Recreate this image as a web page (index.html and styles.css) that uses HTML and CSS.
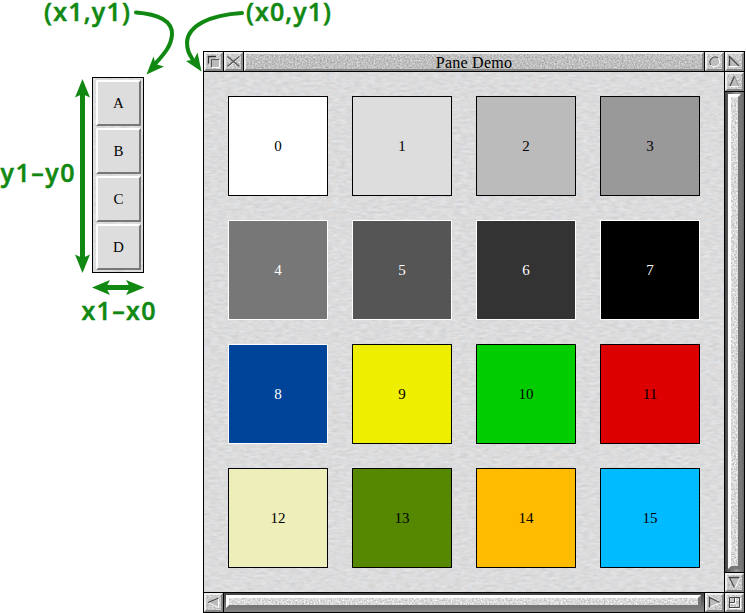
FILE: index.html
```
<!DOCTYPE html>
<html lang="en">
<head>
<meta charset="utf-8">
<title>Pane Demo</title>
<link rel="stylesheet" href="styles.css">
</head>
<body>
<svg class="defs" width="0" height="0">
  <filter id="paper" x="0" y="0" width="100%" height="100%" color-interpolation-filters="sRGB">
    <feTurbulence type="fractalNoise" baseFrequency=".14 .38" numOctaves="3" seed="4"/>
    <feColorMatrix values=".10 .07 0 0 .775  .10 .04 .03 0 .775  .10 .03 .06 0 .77  0 0 0 0 1"/>
  </filter>
  <filter id="grain" x="0" y="0" width="100%" height="100%" color-interpolation-filters="sRGB">
    <feTurbulence type="fractalNoise" baseFrequency=".6" numOctaves="2" seed="8"/>
    <feColorMatrix values=".42 0 0 0 .58  .42 0 0 0 .58  .42 0 0 0 .58  0 0 0 0 1"/>
  </filter>
</svg>
<main class="scene">
  <section class="panel">
    <svg class="tex"><rect width="100%" height="100%" filter="url(#paper)"/></svg>
    <div class="key">A</div><div class="key">B</div><div class="key">C</div><div class="key">D</div>
  </section>
  <section class="window">
    <div class="ctl"><svg class="tex"><rect width="100%" height="100%" filter="url(#grain)"/></svg><svg class="icon" viewBox="0 0 19 19"><path d="M4.500 11.500V4.500H12" stroke="#333" stroke-width="1.300"/><path d="M7 7h8v8H7z" fill="#bbb"/><path d="M7.500 15V7.500H15" stroke="#555"/><path d="M8 15.500h7.500V8" stroke="#fff"/></svg></div>
    <div class="ctl"><svg class="tex"><rect width="100%" height="100%" filter="url(#grain)"/></svg><svg class="icon" viewBox="0 0 19 19"><path d="M4 5l12 10M16 5L4 15" stroke="#fff" stroke-width="1.500"/><path d="M3.500 4.500l12 10M15.500 4.500l-12 10" stroke="#555" stroke-width="1.400"/></svg></div>
    <div class="ctl title"><svg class="tex"><rect width="100%" height="100%" filter="url(#grain)"/></svg><span>Pane Demo</span></div>
    <div class="ctl"><svg class="tex"><rect width="100%" height="100%" filter="url(#grain)"/></svg><svg class="icon" viewBox="0 0 19 19"><circle cx="9.500" cy="9.500" r="5.200" fill="#bebebe" stroke="#fff"/><path d="M5.800 13A5.200 5.200 0 0 1 13 5.800" stroke="#555" stroke-width="1.200"/></svg></div>
    <div class="ctl"><svg class="tex"><rect width="100%" height="100%" filter="url(#grain)"/></svg><svg class="icon" viewBox="0 0 19 19"><path d="M4.500 4.500V14h9.500z" fill="#bbb"/><path d="M4 14.500h10" stroke="#fff"/><path d="M4.500 14v-9.500l9.500 9.500" stroke="#444" stroke-width="1.300"/></svg></div>
    <div class="canvas">
      <svg class="tex"><rect width="100%" height="100%" filter="url(#paper)"/></svg>
      <div class="cell c0">0</div><div class="cell c1">1</div><div class="cell c2">2</div><div class="cell c3">3</div>
      <div class="cell light c4">4</div><div class="cell light c5">5</div><div class="cell light c6">6</div><div class="cell light c7">7</div>
      <div class="cell light c8">8</div><div class="cell c9">9</div><div class="cell c10">10</div><div class="cell c11">11</div>
      <div class="cell c12">12</div><div class="cell c13">13</div><div class="cell c14">14</div><div class="cell c15">15</div>
    </div>
    <div class="side">
      <div class="ctl"><svg class="tex"><rect width="100%" height="100%" filter="url(#grain)"/></svg><svg class="icon" viewBox="0 0 19 19"><path d="M9.500 4L14.500 14.500H5z" fill="#bbb" stroke="#fff"/><path d="M5 14L9.500 4" stroke="#444" stroke-width="1.300"/><path d="M9.500 4l4.500 10.500" stroke="#888"/></svg></div>
      <div class="track"><div class="thumb"><svg class="tex"><rect width="100%" height="100%" filter="url(#grain)"/></svg></div></div>
      <div class="ctl"><svg class="tex"><rect width="100%" height="100%" filter="url(#grain)"/></svg><svg class="icon" viewBox="0 0 19 19"><path d="M5 4.500h10L10 15z" fill="#bbb" stroke="#fff"/><path d="M14.500 4.500H4.500L9.500 14.500" stroke="#444" stroke-width="1.300"/></svg></div>
    </div>
    <div class="foot">
      <div class="ctl"><svg class="tex"><rect width="100%" height="100%" filter="url(#grain)"/></svg><svg class="icon" viewBox="0 0 19 19"><path d="M4 9.500L14.500 5v9.500z" fill="#bbb" stroke="#fff"/><path d="M4 9.500L14.500 5" stroke="#444" stroke-width="1.300"/></svg></div>
      <div class="track wide"><div class="thumb"><svg class="tex"><rect width="100%" height="100%" filter="url(#grain)"/></svg></div></div>
      <div class="ctl"><svg class="tex"><rect width="100%" height="100%" filter="url(#grain)"/></svg><svg class="icon" viewBox="0 0 19 19"><path d="M4.500 4.500L15 9.500l-10.500 5z" fill="#bbb" stroke="#fff"/><path d="M4.500 14.500v-10L14.500 9.500" stroke="#444" stroke-width="1.200"/></svg></div>
    </div>
    <div class="ctl"><svg class="tex"><rect width="100%" height="100%" filter="url(#grain)"/></svg><svg class="icon" viewBox="0 0 19 19"><path d="M5 15.500h10.500V5M5 10.500h5.500V5" stroke="#fff"/><path d="M4.500 15V4.500H15M9.500 4.500v5h-5M14.500 4.500v10h-10" stroke="#444"/></svg></div>
  </section>
  <svg class="notes" width="746" height="613" viewBox="0 0 746 613">
    <g class="label">
      <text x="44" y="21" textLength="86">(x1,y1)</text>
      <text x="246" y="21" textLength="85">(x0,y1)</text>
      <text x="0.500" y="182" textLength="74">y1–y0</text>
      <text x="81.500" y="320" textLength="74">x1–x0</text>
    </g>
    <g class="line">
      <path d="M136 12.500C158 14 173 21 172 35C171 46 165 53 155 64"/>
      <path d="M242 13C209 15 188 26 187 42C187 50 189 54 193 60"/>
      <path class="thick" d="M82.500 92V260M104 287.500h28"/>
    </g>
    <g class="head">
      <path d="M146.500 74.500L153.500 56.500L155.500 64L164 66.500z"/>
      <path d="M201.500 71.500L186 61L194 59.500L197.500 52.500z"/>
      <path d="M82.500 79L90 97.500L82.500 94L75 97.500zM82.500 273L75 254.500L82.500 258L90 254.500z"/>
      <path d="M92 287.500L110 280L106 287.500L110 295zM144.500 287.500L126 280L130 287.500L126 295z"/>
    </g>
  </svg>
</main>
</body>
</html>
```
FILE: styles.css
```
body { margin: 0; background: #fff; font-family: "Liberation Serif", serif; color: #000; }
.defs { position: absolute; }
.scene { position: relative; display: flex; align-items: flex-start; width: 746px; height: 613px; overflow: hidden; }
.tex { position: absolute; inset: 0; width: 100%; height: 100%; z-index: -1; }
.panel { position: relative; isolation: isolate; box-sizing: border-box; width: 52px; height: 196px; margin: 77px 0 0 92px; border: 1px solid #000; padding: 2px 2px 2px 3px; display: flex; flex-direction: column; gap: 2px; background: #ddd; }
.key { box-sizing: border-box; width: 45px; height: 46px; border: 2px solid; border-color: #fff #777 #777 #fff; background: #ddd; display: flex; align-items: center; justify-content: center; font-size: 15px; }
.window { margin: 51px 0 0 59px; display: grid; box-sizing: border-box; width: 542px; height: 562px; padding: 1px; gap: 1px; background: #000; grid-template-columns: 19px 19px 460px 19px 19px; grid-template-rows: 19px 520px 19px; }
.ctl { position: relative; isolation: isolate; width: 19px; height: 19px; background: #ccc; flex: none; }
.ctl::after, .thumb::after { content: ""; position: absolute; inset: 0; border: 2px solid; border-color: #eee #888 #888 #eee; z-index: -1; }
.icon { display: block; width: 19px; height: 19px; fill: none; }
.title { width: 460px; text-align: center; font-size: 16px; line-height: 21px; letter-spacing: .25px; }
.title .tex { filter: brightness(.95); }
.canvas { grid-column: span 4; position: relative; isolation: isolate; box-sizing: border-box; padding: 24px; display: grid; grid-template-columns: repeat(4, 100px); grid-auto-rows: 100px; gap: 24px; background: #ddd; }
.cell { box-sizing: border-box; border: 1px solid #000; display: flex; align-items: center; justify-content: center; font-size: 15px; }
.light { border-color: #fff; color: #fff; }
.c0 { background: #fff; } .c1 { background: #ddd; } .c2 { background: #bbb; } .c3 { background: #999; }
.c4 { background: #777; } .c5 { background: #555; } .c6 { background: #333; } .c7 { background: #000; }
.c8 { background: #049; } .c9 { background: #ee0; } .c10 { background: #0c0; } .c11 { background: #d00; }
.c12 { background: #eeb; } .c13 { background: #580; } .c14 { background: #fb0; } .c15 { background: #0bf; }
.side { display: flex; flex-direction: column; gap: 1px; }
.foot { display: flex; gap: 1px; grid-column: span 4; }
.track { flex: 1; box-sizing: border-box; padding: 2px 3px 3px; background: linear-gradient(90deg, #444, #999 60%, #666); display: flex; }
.wide { padding: 2px 3px 4px 2px; background: linear-gradient(#444, #888); }
.thumb { position: relative; isolation: isolate; flex: 1; }
.thumb::after { border-width: 3px; border-color: #fff #777 #777 #fff; }
.thumb .tex { filter: brightness(1.08); }
.notes { position: absolute; left: 0; top: 0; }
.label { fill: #118811; stroke: #118811; stroke-width: .5; font: 600 25px "Open Sans", sans-serif; }
.line { fill: none; stroke: #118811; stroke-width: 4; stroke-linecap: round; }
.thick { stroke-width: 5; stroke-linecap: butt; }
.head { fill: #118811; }
```
